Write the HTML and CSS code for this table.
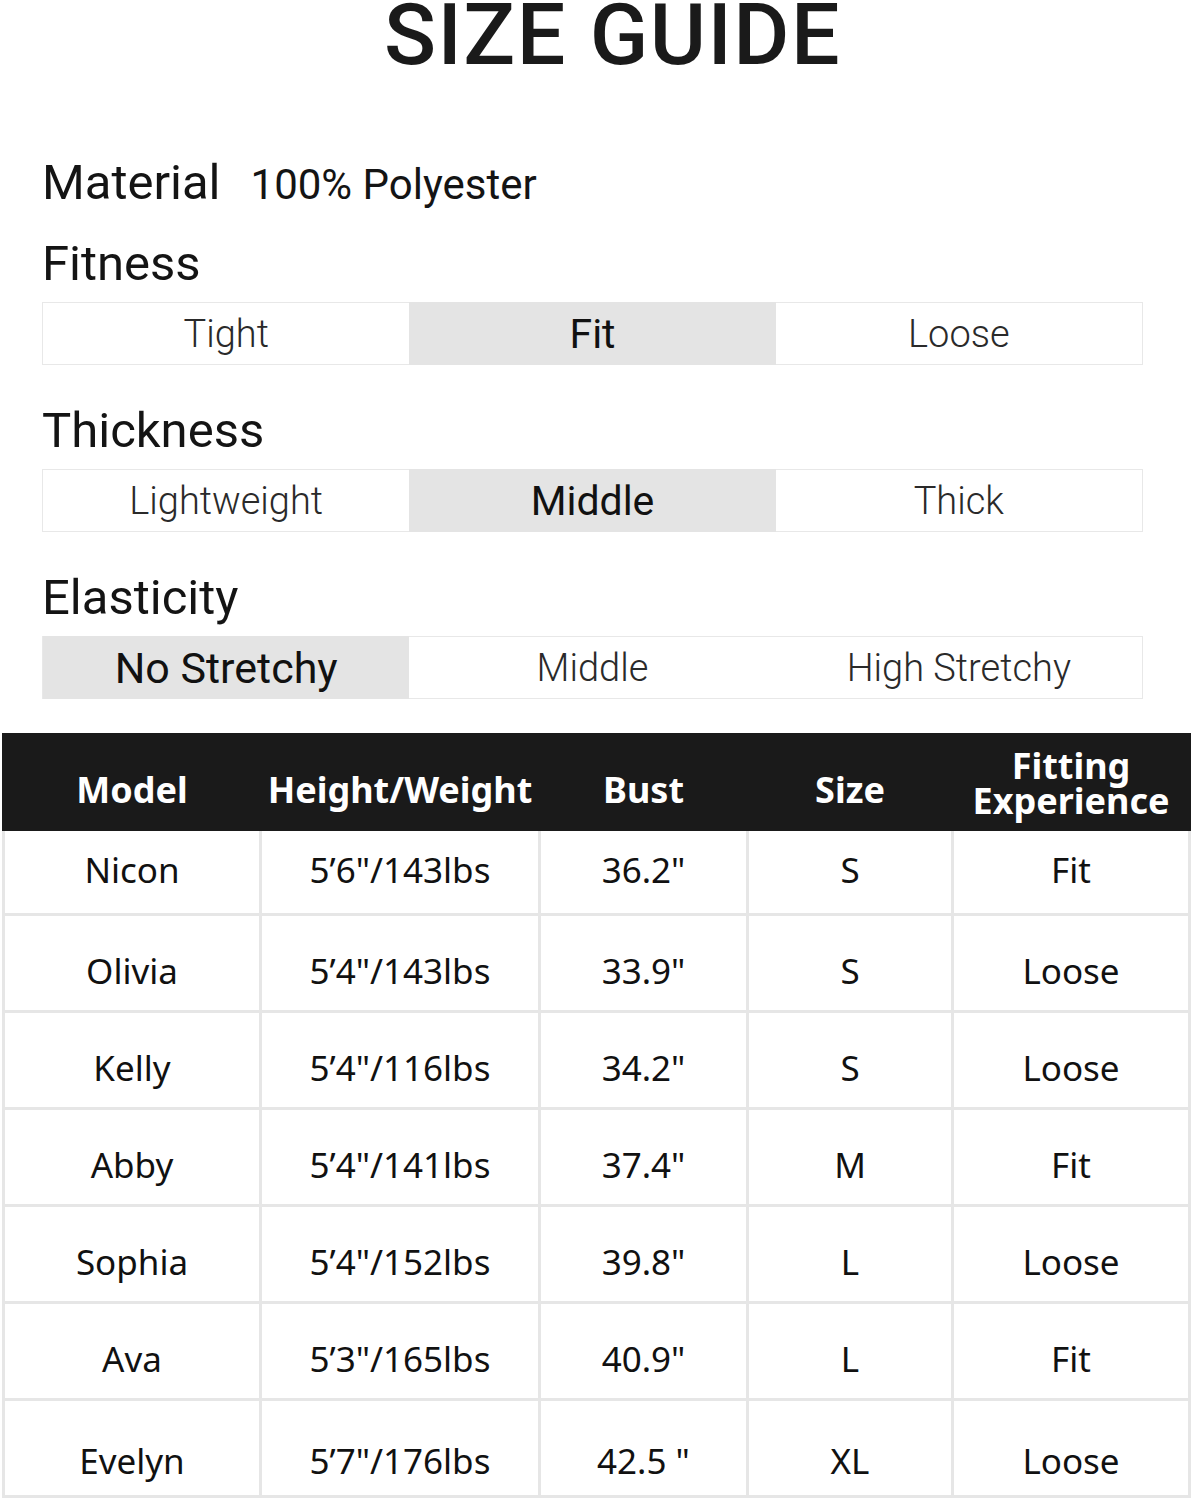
FILE: index.html
```html
<!DOCTYPE html>
<html lang="en">
<head>
<meta charset="utf-8">
<title>Size Guide</title>
<link rel="stylesheet" href="styles.css">
</head>
<body>
<div class="page">
  <h1 class="title">SIZE GUIDE</h1>

  <div class="material">
    <span class="label">Material</span>
    <span class="material-value">100% Polyester</span>
  </div>

  <section class="attr attr-first">
    <div class="label">Fitness</div>
    <div class="segment">
      <div class="seg">Tight</div>
      <div class="seg seg-on">Fit</div>
      <div class="seg">Loose</div>
    </div>
  </section>

  <section class="attr">
    <div class="label">Thickness</div>
    <div class="segment">
      <div class="seg">Lightweight</div>
      <div class="seg seg-on">Middle</div>
      <div class="seg">Thick</div>
    </div>
  </section>

  <section class="attr">
    <div class="label">Elasticity</div>
    <div class="segment">
      <div class="seg seg-on seg-on-lg">No Stretchy</div>
      <div class="seg">Middle</div>
      <div class="seg">High Stretchy</div>
    </div>
  </section>

  <div class="table">
    <div class="thead">
      <div class="th">Model</div>
      <div class="th">Height/Weight</div>
      <div class="th">Bust</div>
      <div class="th">Size</div>
      <div class="th th-two"><span>Fitting</span><span>Experience</span></div>
    </div>
    <div class="tbody">
      <div class="td td-first">Nicon</div><div class="td td-first">5’6"/143lbs</div><div class="td td-first">36.2"</div><div class="td td-first">S</div><div class="td td-first">Fit</div>
      <div class="td">Olivia</div><div class="td">5’4"/143lbs</div><div class="td">33.9"</div><div class="td">S</div><div class="td">Loose</div>
      <div class="td">Kelly</div><div class="td">5’4"/116lbs</div><div class="td">34.2"</div><div class="td">S</div><div class="td">Loose</div>
      <div class="td">Abby</div><div class="td">5’4"/141lbs</div><div class="td">37.4"</div><div class="td">M</div><div class="td">Fit</div>
      <div class="td">Sophia</div><div class="td">5’4"/152lbs</div><div class="td">39.8"</div><div class="td">L</div><div class="td">Loose</div>
      <div class="td">Ava</div><div class="td">5’3"/165lbs</div><div class="td">40.9"</div><div class="td">L</div><div class="td">Fit</div>
      <div class="td td-last">Evelyn</div><div class="td td-last">5’7"/176lbs</div><div class="td td-last">42.5 "</div><div class="td td-last">XL</div><div class="td td-last">Loose</div>
    </div>
  </div>
</div>
</body>
</html>
```

FILE: styles.css
```css
* { box-sizing: border-box; }

html, body {
  margin: 0;
  padding: 0;
  background: #ffffff;
}

.page {
  width: 1193px;
  font-family: Roboto, "Noto Sans", sans-serif;
  color: #151515;
}

.title {
  margin: 0;
  height: 70px;
  font-family: Roboto, sans-serif;
  font-weight: 500;
  font-size: 86px;
  line-height: 70px;
  text-align: center;
  color: #1a1a1a;
  letter-spacing: 1.5px;
  padding-left: 32px;
  overflow: visible;
}

.material {
  margin: 85px 0 0 42px;
  display: flex;
  align-items: baseline;
  height: 56px;
}

.label {
  font-size: 49px;
  line-height: 56px;
  font-weight: 400;
  color: #141414;
}

.material-value {
  margin-left: 30px;
  font-size: 42px;
  line-height: 56px;
  color: #141414;
}

.attr {
  margin: 38px 0 0 42px;
  width: 1101px;
}

.attr-first {
  margin-top: 25px;
}

.segment {
  margin-top: 10px;
  height: 63px;
  border: 1px solid #e8e8e8;
  display: grid;
  grid-template-columns: 1fr 1fr 1fr;
}

.seg {
  display: flex;
  align-items: center;
  justify-content: center;
  font-size: 38px;
  font-weight: 300;
  color: #2a2a2a;
  margin: -1px 0;
}

.seg-on {
  background: #e4e4e4;
  font-size: 41px;
  font-weight: 400;
  color: #111;
}

.seg-on-lg {
  font-size: 43px;
}

.table {
  margin: 34px 0 0 2px;
  width: 1189px;
}

.thead,
.tbody {
  display: grid;
  grid-template-columns: 254px 276px 205px 202px 234px;
  column-gap: 3px;
}

.thead {
  background: #1a1a1a;
  height: 98px;
  padding: 0 3px;
}

.th {
  display: flex;
  align-items: center;
  justify-content: center;
  text-align: center;
  padding-top: 14px;
  font-family: "Noto Sans", sans-serif;
  font-weight: 700;
  font-size: 36px;
  color: #ffffff;
}

.th-two {
  flex-direction: column;
  line-height: 35px;
  padding-top: 2px;
}

.tbody {
  background: #e6e6e6;
  padding: 0 3px 3px;
  row-gap: 3px;
  grid-template-rows: 82px repeat(6, 94px);
}

.td {
  background: #ffffff;
  display: flex;
  align-items: center;
  justify-content: center;
  font-family: "Noto Sans", sans-serif;
  font-size: 35px;
  color: #111;
  padding-top: 14px;
}

.td-first {
  padding-top: 0;
  padding-bottom: 6px;
}

.td-last {
  padding-top: 24px;
}
```
